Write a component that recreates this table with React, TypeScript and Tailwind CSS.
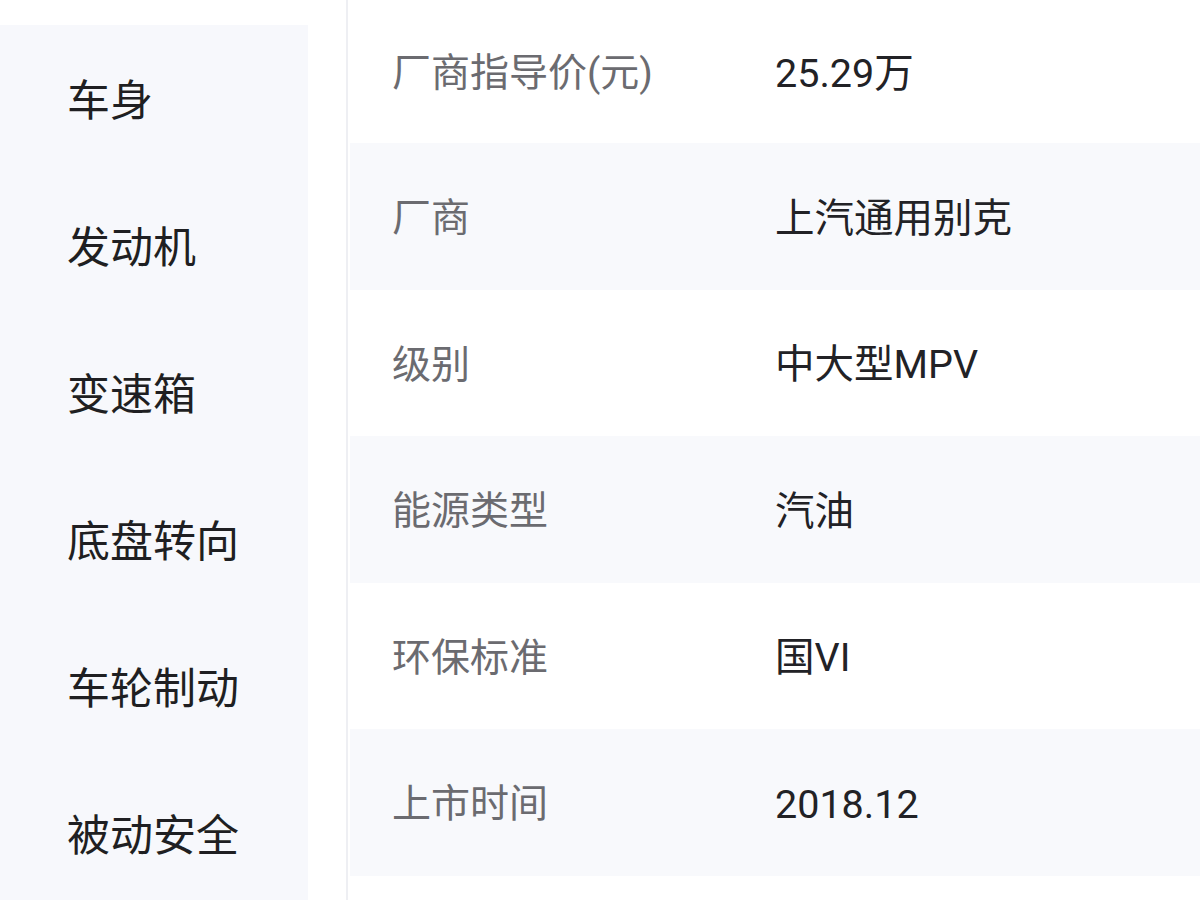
const menu = ["车身", "发动机", "变速箱", "底盘转向", "车轮制动", "被动安全"];

const specs = [
  { label: "厂商指导价(元)", value: "25.29万" },
  { label: "厂商", value: "上汽通用别克" },
  { label: "级别", value: "中大型MPV" },
  { label: "能源类型", value: "汽油" },
  { label: "环保标准", value: "国VI" },
  { label: "上市时间", value: "2018.12" },
];

const font = { fontFamily: 'Roboto, "Noto Sans CJK SC", sans-serif' };

export default function App() {
  return (
    <div className="flex h-[900px] w-[1200px] overflow-hidden bg-white" style={font}>
      <aside className="w-[308px] shrink-0 pt-[25px]">
        <div className="h-full bg-[#f7f8fc]">
          {menu.map((m) => (
            <div key={m} className="flex h-[147px] items-center pl-[67px] pt-[5px] text-[43px] text-[#1f1f22]">
              {m}
            </div>
          ))}
        </div>
      </aside>
      <div className="ml-[38px] h-full w-[2px] bg-[#eeeff3]" />
      <main className="flex-1 pl-[2px]">
        {specs.map((s, i) => (
          <div
            key={s.label}
            className={`flex items-center pl-[42px] pt-[4px] ${i === 0 ? "h-[143px]" : "h-[146.6px]"} ${
              i % 2 === 1 ? "bg-[#f8f9fc]" : "bg-white"
            }`}
          >
            <div className="w-[383px] text-[39px] text-[#6b6b70]">{s.label}</div>
            <div className="text-[39.5px] text-[#222226]">{s.value}</div>
          </div>
        ))}
      </main>
    </div>
  );
}
